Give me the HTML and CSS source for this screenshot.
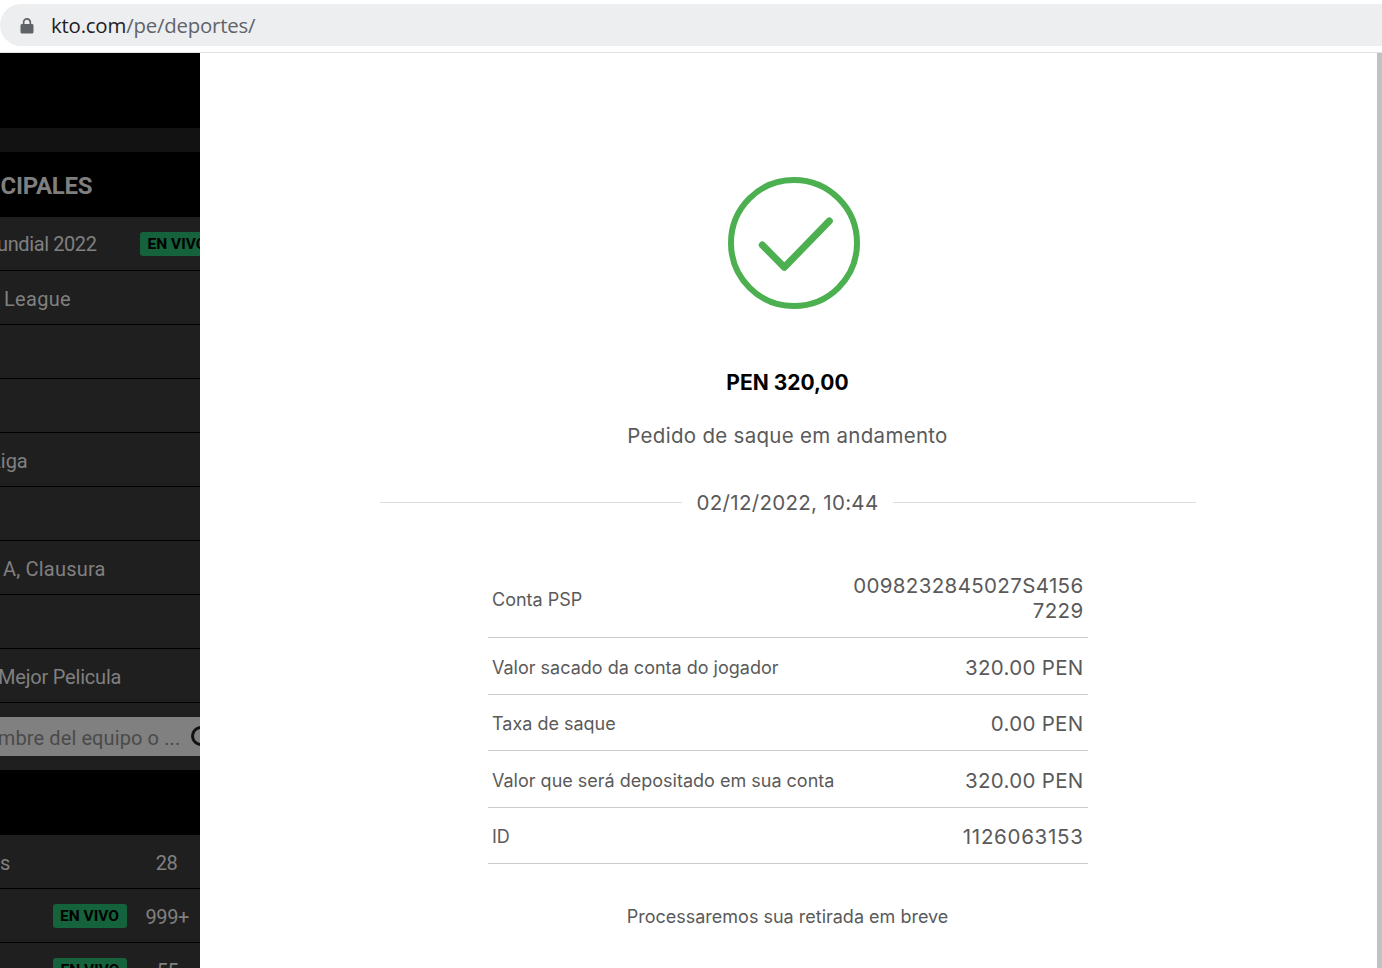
FILE: index.html
```html
<!DOCTYPE html>
<html lang="pt">
<head>
<meta charset="utf-8">
<title>kto.com</title>
<link rel="stylesheet" href="styles.css">
</head>
<body>
<header class="chrome">
  <div class="omnibox">
    <svg class="lock" viewBox="0 0 14 16" width="14" height="16" aria-hidden="true"><path d="M2.800 6V4.200a4.200 4.200 0 0 1 8.400 0V6h.8c.8 0 1.500.7 1.500 1.500v6.500c0 .8-.7 1.500-1.500 1.500H2c-.8 0-1.500-.7-1.500-1.500V7.500C.5 6.700 1.200 6 2 6h.8zm1.700 0h5V4.200a2.500 2.500 0 0 0-5 0V6z" fill="#5f6368"/></svg>
    <span class="url"><span class="host">kto.com</span>/pe/deportes/</span>
  </div>
</header>
<div class="page">
  <aside class="sidebar">
    <div class="black-a"></div>
    <div class="strip"></div>
    <div class="heading"><span class="heading-text">PRINCIPALES</span></div>
    <div class="row"><span class="name off-mundial">Mundial 2022</span><span class="live live-top">EN VIVO</span></div>
    <div class="row"><span class="name off-league">League</span></div>
    <div class="row"></div>
    <div class="row"></div>
    <div class="row"><span class="name off-liga">Liga</span></div>
    <div class="row"></div>
    <div class="row"><span class="name off-claus">A, Clausura</span></div>
    <div class="row"></div>
    <div class="row"><span class="name off-mejor">Mejor Pelicula</span></div>
    <div class="search-wrap">
      <div class="search"><span class="placeholder">Nombre del equipo o ...</span><span class="search-icon"></span></div>
    </div>
    <div class="black-b"></div>
    <div class="row row-count"><span class="name off-s">s</span><span class="count count-28">28</span></div>
    <div class="row row-count"><span class="live">EN VIVO</span><span class="count">999+</span></div>
    <div class="row row-count"><span class="live">EN VIVO</span><span class="count">55</span></div>
  </aside>
  <main class="panel">
    <div class="check-wrap">
      <svg class="check" viewBox="0 0 132 132" width="132" height="132" aria-hidden="true">
        <circle cx="66" cy="66" r="63" fill="none" stroke="#4caf50" stroke-width="6"/>
        <path d="M34.300 68 L56.300 90.300 L101.300 44" fill="none" stroke="#4caf50" stroke-width="7" stroke-linecap="round" stroke-linejoin="round"/>
      </svg>
    </div>
    <h1 class="amount">PEN 320,00</h1>
    <p class="status">Pedido de saque em andamento</p>
    <div class="date-line"><span class="date">02/12/2022, 10:44</span></div>
    <div class="details">
      <div class="detail detail-first"><span class="label">Conta PSP</span><span class="value value-wrap">0098232845027S41567229</span></div>
      <div class="detail"><span class="label">Valor sacado da conta do jogador</span><span class="value">320.00 PEN</span></div>
      <div class="detail"><span class="label">Taxa de saque</span><span class="value">0.00 PEN</span></div>
      <div class="detail"><span class="label">Valor que será depositado em sua conta</span><span class="value">320.00 PEN</span></div>
      <div class="detail"><span class="label">ID</span><span class="value value-id">1126063153</span></div>
    </div>
    <p class="note">Processaremos sua retirada em breve</p>
  </main>
  <div class="scrollbar"></div>
</div>
</body>
</html>
```
FILE: styles.css
```css
* { box-sizing: border-box; }
html, body { margin: 0; height: 100%; overflow: hidden; background: #fff; }
body { display: flex; flex-direction: column; height: 968px; }

.chrome { height: 53px; flex: none; padding-top: 4px; border-bottom: 1px solid #dfe0e2; background: #fff; }
.omnibox { height: 42px; width: 1420px; border-radius: 21px; background: #edeef0; display: flex; align-items: center; padding-left: 20px; }
.lock { flex: none; margin-top: 2px; }
.url { margin-left: 17px; padding-top: 1px; font: 20.400px/1 "Open Sans", sans-serif; color: #5f6368; letter-spacing: -.2px; }
.host { color: #202124; }

.page { flex: 1; min-height: 0; display: flex; overflow: hidden; }

.sidebar { width: 200px; flex: none; background: #1f1f1f; overflow: hidden; font-family: Roboto, sans-serif; color: #808080; }
.black-a { height: 75px; background: #000; }
.strip { height: 24px; background: #121212; }
.heading { height: 65px; background: #000; display: flex; align-items: center; white-space: nowrap; padding-top: 2px; }
.heading-text { margin-left: -53px; font-size: 24px; font-weight: 700; color: #7f7f7f; letter-spacing: -.3px; }
.row { height: 54px; padding-top: 2px; border-bottom: 1px solid #000; display: flex; align-items: center; white-space: nowrap; position: relative; }
.name { font-size: 20px; color: #808080; }
.off-mundial { margin: -1px 0 0 -20px; letter-spacing: -.4px; }
.off-league { margin-left: 4px; letter-spacing: .3px; }
.off-liga { margin-left: -10px; }
.off-claus { margin-left: 3px; letter-spacing: .2px; }
.off-mejor { margin-left: -2px; letter-spacing: -.2px; }
.off-s { margin-left: 0; }
.live { flex: none; display: inline-flex; align-items: center; justify-content: center; width: 74px; height: 24px; margin-top: -2px; border-radius: 3px; background: #14633c; color: #000; font-size: 15.500px; font-weight: 700; }
.live-top { position: absolute; left: 140px; }
.search-wrap { height: 67px; padding-top: 14px; overflow: hidden; }
.search { height: 39px; padding-top: 2px; background: #808080; display: flex; align-items: center; white-space: nowrap; position: relative; }
.placeholder { margin-left: -28px; font-size: 20px; color: #4a4a4a; letter-spacing: .1px; }
.search-icon { position: absolute; left: 191px; top: 9px; width: 20px; height: 20px; border: 3px solid #111; border-radius: 50%; }
.black-b { height: 65px; background: #000; }
.row-count { justify-content: flex-end; padding-right: 11px; gap: 19px; }
.row-count .name { margin-right: auto; }
.count { font-size: 20px; color: #808080; min-width: 43px; text-align: center; letter-spacing: -.4px; }
.count-28 { margin-right: 1px; }

.panel { flex: 1; min-width: 0; background: #fff; display: flex; flex-direction: column; align-items: center; font-family: Inter, sans-serif; color: #5a5a5a; padding: 124px 2px 0 0; }
.check-wrap { width: 132px; height: 132px; margin-left: 12px; }
.check { display: block; }
.amount { margin: 60px 0 0; font-size: 21px; line-height: 28px; font-weight: 700; color: #000; }
.status { margin: 25px 0 0; font-size: 20.500px; line-height: 28px; color: #5a5a5a; letter-spacing: .29px; }
.date-line { width: 816px; margin-top: 37px; display: flex; align-items: center; gap: 15px; }
.date-line::before, .date-line::after { content: ""; flex: 1; height: 1px; background: #ddd; }
.date { padding-top: 2px; font-size: 20.500px; line-height: 28px; color: #5a5a5a; letter-spacing: .3px; }
.details { width: 600px; margin-top: 45px; }
.detail { display: flex; justify-content: space-between; align-items: center; min-height: 56.500px; padding: 2.500px 4px 0 4.500px; border-bottom: 1px solid #ccc; }
.detail-first { min-height: 76px; padding-top: 0; }
.label { font-size: 18px; color: #5a5a5a; }
.value { font-size: 20.500px; line-height: 25px; color: #5a5a5a; text-align: right; letter-spacing: .3px; }
.value-wrap { width: 240px; margin-bottom: 4px; letter-spacing: .36px; word-break: break-all; }
.value-id { letter-spacing: .7px; }
.note { margin: 42px 0 0; font-size: 18px; line-height: 22px; color: #5a5a5a; }

.scrollbar { width: 5px; flex: none; background: #c1c1c1; }
```
